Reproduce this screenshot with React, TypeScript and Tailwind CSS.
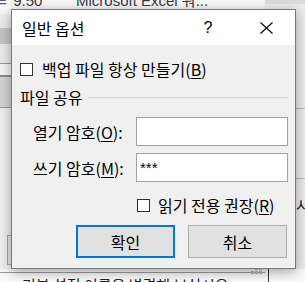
import React from "react";

const ko = "font-['Noto_Sans_CJK_KR','Noto_Sans',sans-serif]";

const Checkbox = () => (
  <span className="block w-[13px] h-[13px] border border-[#333333] bg-white shrink-0" />
);

const Mnemonic = ({ k }: { k: string }) => (
  <span>
    (<span className="underline underline-offset-2">{k}</span>)
  </span>
);

const Backdrop = () => (
  <>
    {/* top strip of the window behind */}
    <div className="absolute left-0 top-0 w-[265px] h-[14px] bg-[#f7f7f7] overflow-hidden">
      <span className="absolute left-[-6px] top-[-10px] text-[15px] text-[#3a3a3a] font-['Liberation_Sans',sans-serif]">
        ㄹ 9:50
      </span>
      <span className="absolute left-[76px] top-[-10px] text-[15px] text-[#3a3a3a] font-['Liberation_Sans','Noto_Sans_CJK_KR',sans-serif]">
        Microsoft Excel 워...
      </span>
    </div>
    <div className="absolute left-[265px] top-0 w-[40px] h-[4px] bg-[#dcdcdc]" />
    <div className="absolute left-[265px] top-[4px] w-[40px] h-[10px] bg-[#ededed]" />
    {/* left strip */}
    <div className="absolute left-0 top-[14px] w-[11px] h-[14px] bg-[#ececec]" />
    <div className="absolute left-0 top-[28px] w-[11px] h-[16px] bg-[#c4c4c4]" />
    <div className="absolute left-0 top-[44px] w-[11px] h-[19px] bg-[#ececec]" />
    <div className="absolute left-0 top-[63px] w-[11px] h-px bg-[#9a9a9a]" />
    <div className="absolute left-0 top-[64px] w-[11px] h-[11px] bg-[#f5f5f5]" />
    <div className="absolute left-0 top-[75px] w-[11px] h-[2px] bg-[#8a8a8a]" />
    <div className="absolute left-0 top-[77px] w-[11px] h-[30px] bg-[#d4d4d4]" />
    <div className="absolute left-0 top-[107px] w-[11px] h-px bg-[#9a9a9a]" />
    <div className="absolute left-[7px] top-[235px] w-[20px] h-[30px] border border-[#a8a8a8] bg-[#e8e8e8]" />
    {/* right strip */}
    <div className="absolute left-[296px] top-[14px] w-[9px] h-[255px] bg-[#ebebeb]" />
    <div className="absolute left-[296px] top-[108px] w-[9px] h-px bg-[#b8b8b8]" />
    <div className="absolute left-[296px] top-[178px] w-[9px] h-px bg-[#b8b8b8]" />
    <span className={`absolute left-[296px] top-[195px] text-[15px] leading-[20px] text-[#222] ${ko}`}>
      시
    </span>
    {/* bottom strip */}
    <div className="absolute left-0 top-[269px] w-[305px] h-[13px] bg-[#fafafa] overflow-hidden">
      <div className="absolute left-0 top-[3px] w-[265px] h-px bg-[#9c9c9c]" />
      <div className="absolute left-[268px] top-0 w-px h-[13px] bg-[#333]" />
      <span className={`absolute left-[22px] top-[6px] text-[15px] leading-[20px] text-[#222] whitespace-nowrap ${ko}`}>
        기본 설정 이름을 변경해 보십시오
      </span>
    </div>
    <div className="absolute left-[251px] top-[267px] grid grid-cols-3 gap-px">
      {Array.from({ length: 6 }).map((_, i) => (
        <span key={i} className={`block w-[3px] h-[3px] ${i === 0 ? "bg-transparent" : "bg-[#b5b5b5]"}`} />
      ))}
    </div>
  </>
);

export default function App() {
  return (
    <div className="relative w-[305px] h-[282px] overflow-hidden bg-[#f0f0f0]">
      <Backdrop />
      <div
        className={`absolute left-[11px] top-[9px] w-[285px] h-[260px] border border-[#7a7a7a] bg-[#f0f0f0] shadow-[0_3px_12px_rgba(0,0,0,0.35)] flex flex-col text-black ${ko}`}
      >
        {/* title bar */}
        <div className="h-[35px] bg-white flex items-center shrink-0">
          <span className="flex-1 pl-[10px] text-[16px] leading-[20px]">일반 옵션</span>
          <span className="w-[58px] text-center text-[16px] font-['Liberation_Sans',sans-serif]">?</span>
          <span className="w-[58px] flex justify-center">
            <svg width="13" height="12" viewBox="0 0 13 12">
              <path d="M0.5 0.5 L12.5 11.5 M12.5 0.5 L0.5 11.5" stroke="#000" strokeWidth="1.1" fill="none" />
            </svg>
          </span>
        </div>

        {/* body */}
        <div className="flex-1 flex flex-col pl-[8px] pr-[7px] pt-[14px] text-[16px] leading-[20px]">
          <label className="h-[20px] flex items-center gap-[9px]">
            <Checkbox />
            <span>
              백업 파일 항상 만들기<Mnemonic k="B" />
            </span>
          </label>

          <div className="mt-[8px] h-[20px] flex items-center gap-[6px]">
            <span>파일 공유</span>
            <span className="flex-1 h-px bg-[#d5d5d5]" />
          </div>

          <div className="mt-[10px] flex items-center ml-[13px]">
            <span className="w-[103px]">
              열기 암호<Mnemonic k="O" />:
            </span>
            <div className="flex-1 h-[29px] border border-[#a0a0a0] bg-white" />
          </div>

          <div className="mt-[7px] flex items-center ml-[13px]">
            <span className="w-[103px]">
              쓰기 암호<Mnemonic k="M" />:
            </span>
            <div className="flex-1 h-[29px] border border-[#a0a0a0] bg-white flex items-center pl-[3px] text-[15px] font-['Liberation_Sans',sans-serif]">
              ***
            </div>
          </div>

          <label className="mt-[13px] h-[20px] flex items-center gap-[8px] ml-[117px]">
            <Checkbox />
            <span>
              읽기 전용 권장<Mnemonic k="R" />
            </span>
          </label>

          <div className="mt-[10px] flex justify-end gap-[13px] pr-[1px]">
            <button className="w-[99px] h-[33px] border-2 border-[#0078d7] bg-[#e1e1e1] text-[16px]">
              확인
            </button>
            <button className="w-[99px] h-[33px] border border-[#adadad] bg-[#e1e1e1] text-[16px]">
              취소
            </button>
          </div>
        </div>
      </div>
    </div>
  );
}
